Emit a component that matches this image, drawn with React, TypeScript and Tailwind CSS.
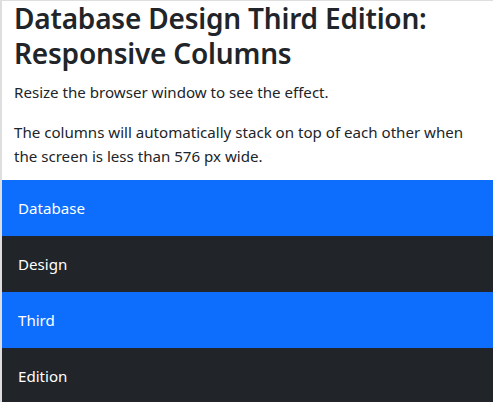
export default function App() {
  const rows = [
    { label: 'Database', bg: 'bg-[#0d6efd]' },
    { label: 'Design', bg: 'bg-[#212529]' },
    { label: 'Third', bg: 'bg-[#0d6efd]' },
    { label: 'Edition', bg: 'bg-[#212529]' },
  ];

  return (
    <div
      className="min-h-screen bg-white border-t border-l-2 border-[#dedede] text-[#212529]"
      style={{ fontFamily: '"Noto Sans", "Open Sans", sans-serif' }}
    >
      <div className="px-3">
        <h1 className="text-[28px] leading-[35.3px] font-semibold tracking-[-0.2px] mb-2">
          Database Design Third Edition: Responsive Columns
        </h1>
        <p className="text-[15.1px] leading-6 mb-4">Resize the browser window to see the effect.</p>
        <p className="text-[15.1px] leading-6 mb-3">
          The columns will automatically stack on top of each other when the screen is less than 576 px wide.
        </p>
      </div>
      <div className="flex flex-col">
        {rows.map((r) => (
          <div key={r.label} className={`${r.bg} text-white p-4 text-[15.1px] leading-6`}>
            {r.label}
          </div>
        ))}
      </div>
    </div>
  );
}
